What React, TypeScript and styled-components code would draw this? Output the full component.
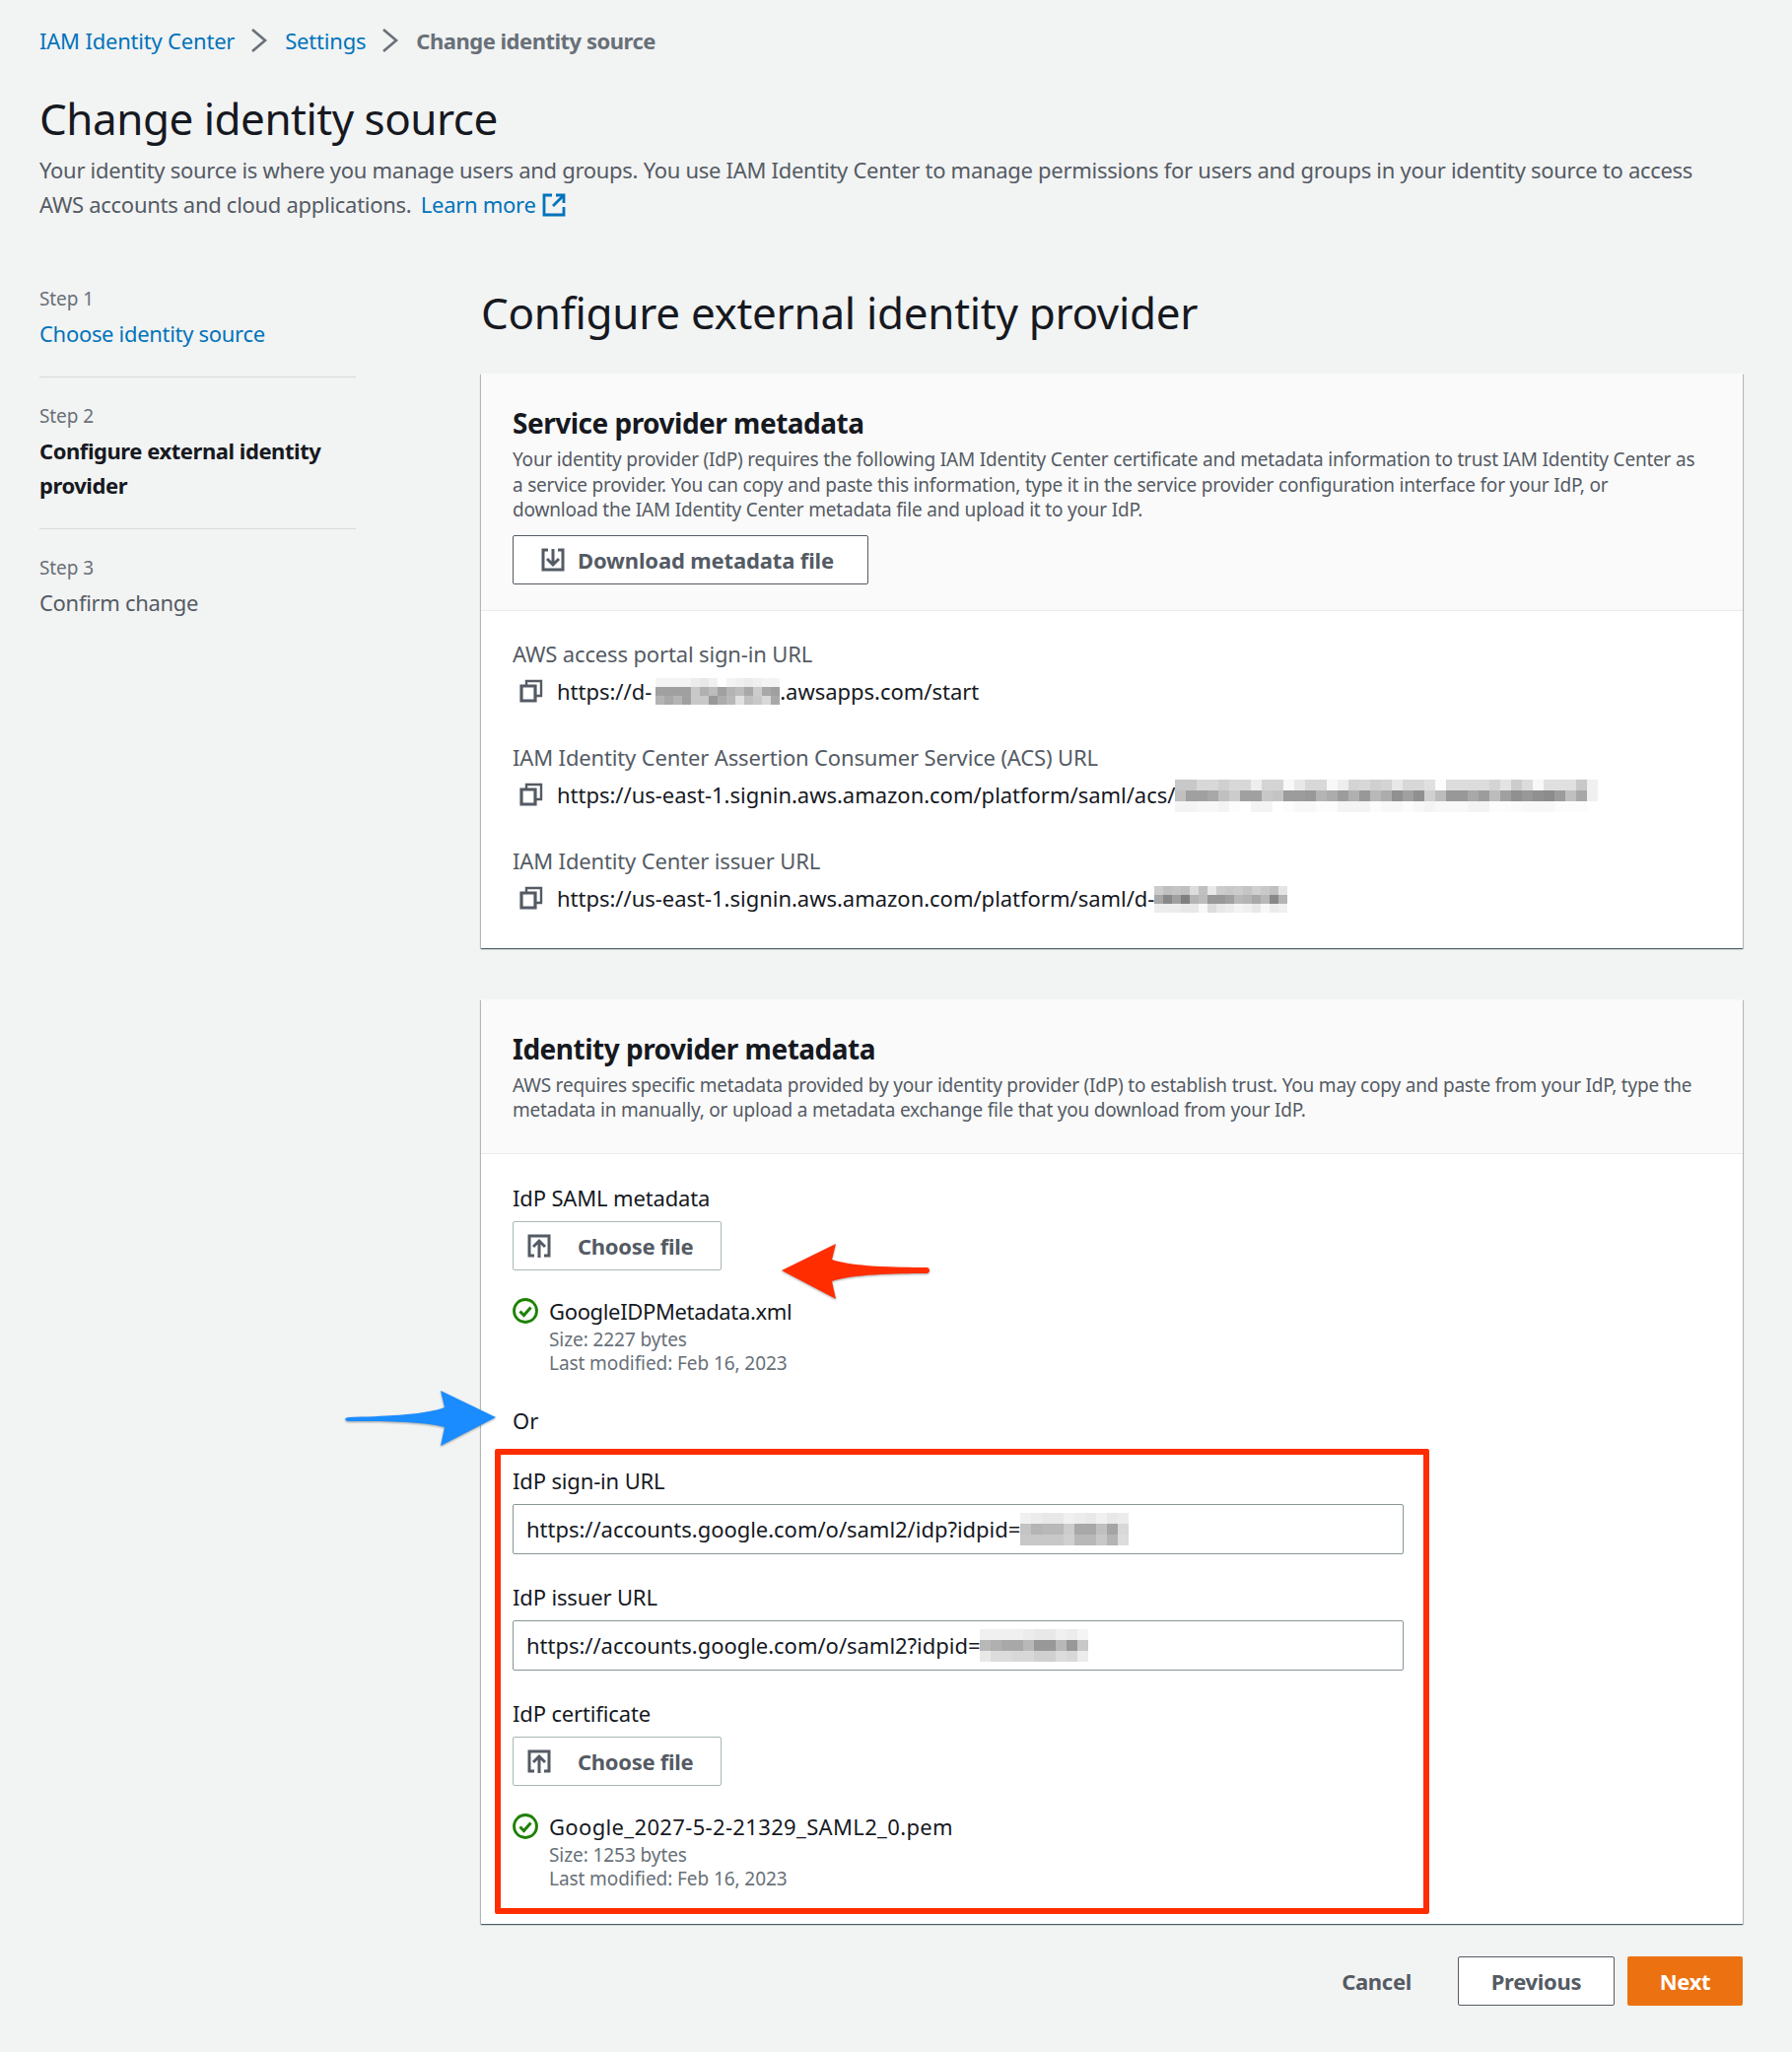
import React from 'react';
import styled, { createGlobalStyle } from 'styled-components';

const FONT = '"Noto Sans", "Open Sans", Arial, sans-serif';
const LINK = '#0073bb';
const INK = '#16191f';
const GREY = '#545b64';
const MUTED = '#687078';

const GlobalStyle = createGlobalStyle`
  html, body { margin: 0; padding: 0; background: #f2f3f3; }
  body { font-family: ${FONT}; color: ${INK}; }
  * { box-sizing: border-box; }
`;

const Page = styled.div`
  position: relative;
  width: 1818px;
  height: 2082px;
  padding: 24px 50px 47px 40px;
  overflow: hidden;
  background: #f2f3f3;
`;

const Crumbs = styled.nav`
  display: flex;
  align-items: center;
  height: 34px;
  font-size: 22px;
  letter-spacing: -0.2px;
`;

const CrumbLink = styled.a`
  color: ${LINK};
`;

const CrumbCurrent = styled.span`
  color: ${MUTED};
  font-weight: 700;
  letter-spacing: -0.5px;
`;

const CrumbSep = styled.svg`
  width: 20px;
  height: 26px;
  margin: 0 16px 0 15px;
  fill: none;
  stroke: ${MUTED};
  stroke-width: 2.6;
`;

const Title = styled.h1`
  margin: 35px 0 0;
  font-size: 44px;
  line-height: 54px;
  font-weight: 400;
  letter-spacing: -0.5px;
`;

const Intro = styled.p`
  margin: 8px 0 0;
  width: 1700px;
  font-size: 22px;
  line-height: 35px;
  color: ${GREY};
  letter-spacing: -0.29px;
`;

const InlineLink = styled.a`
  margin-left: 4px;
  color: ${LINK};
`;

const ExternalIcon = styled.svg`
  width: 24px;
  height: 24px;
  margin-left: 6px;
  vertical-align: -4px;
  fill: none;
  stroke: ${LINK};
  stroke-width: 2.8;
`;

const Columns = styled.div`
  display: grid;
  grid-template-columns: 448px 1280px;
  margin-top: 62px;
`;

const Steps = styled.ol`
  list-style: none;
  margin: 0;
  padding: 2px 0 0;
  width: 321px;
`;

const Step = styled.li<{ $last?: boolean }>`
  padding-bottom: 26px;
  margin-bottom: 25px;
  border-bottom: 1px solid ${(p) => (p.$last ? 'transparent' : '#d5dbdb')};
`;

const StepLabel = styled.div`
  font-size: 19px;
  line-height: 28px;
  color: ${MUTED};
  letter-spacing: -0.1px;
`;

const StepName = styled.div<{ $state: 'done' | 'active' | 'todo' }>`
  margin-top: 4px;
  font-size: 22px;
  line-height: 35px;
  letter-spacing: ${(p) => (p.$state === 'active' ? -0.45 : -0.31)}px;
  color: ${(p) => (p.$state === 'done' ? LINK : p.$state === 'active' ? INK : GREY)};
  font-weight: ${(p) => (p.$state === 'active' ? 700 : 400)};
`;

const Heading = styled.h2`
  margin: 0 0 32px;
  font-size: 44px;
  line-height: 60px;
  font-weight: 400;
  letter-spacing: -0.3px;
`;

const Card = styled.section`
  background: #fff;
  box-shadow: 0 1px 1px 0 rgba(0, 28, 36, 0.5), 1px 1px 1px 0 rgba(0, 28, 36, 0.2), -1px 1px 1px 0 rgba(0, 28, 36, 0.2);
  & + & { margin-top: 52px; }
`;

const CardHeader = styled.header<{ $bottom: number }>`
  padding: 30px 32px ${(p) => p.$bottom}px;
  background: #fafafa;
  border-bottom: 1px solid #eaeded;
`;

const CardTitle = styled.h3`
  margin: 0;
  font-size: 28px;
  line-height: 40px;
  font-weight: 700;
  letter-spacing: -0.5px;
`;

const CardText = styled.p`
  margin: 5px 0 0;
  max-width: 1201px;
  font-size: 19px;
  line-height: 25.5px;
  color: ${GREY};
  letter-spacing: -0.2px;
`;

const CardBody = styled.div<{ $pad: string }>`
  padding: ${(p) => p.$pad};
`;

const OutlineButton = styled.button`
  display: inline-flex;
  align-items: center;
  height: 50px;
  margin-top: 12px;
  padding: 0 34px 0 28px;
  background: #fff;
  border: 1px solid ${GREY};
  border-radius: 2px;
  font: 700 22px ${FONT};
  letter-spacing: -0.15px;
  color: ${GREY};
`;

const ButtonIcon = styled.svg`
  width: 24px;
  height: 24px;
  margin-right: 13px;
  fill: none;
  stroke: ${GREY};
  stroke-width: 2;
`;

const FieldLabel = styled.div`
  font-size: 22px;
  line-height: 34px;
  color: ${GREY};
  letter-spacing: -0.15px;
`;

const UrlRow = styled.div`
  display: flex;
  align-items: center;
  height: 34px;
  margin: 4px 0 33px;
  padding-left: 7px;
  font-size: 22px;
  letter-spacing: -0.02px;
  &:last-child { margin-bottom: 0; }
`;

const CopyIcon = styled.svg`
  width: 24px;
  height: 24px;
  margin-right: 14px;
  fill: none;
  stroke: ${GREY};
  stroke-width: 2.4;
`;

const MosaicGrid = styled.span<{ $cols: number; $cell: number; $drop: number }>`
  display: inline-grid;
  grid-template-columns: repeat(${(p) => p.$cols}, ${(p) => p.$cell}px);
  grid-auto-rows: ${(p) => p.$cell}px;
  flex: none;
  margin-top: ${(p) => p.$drop}px;
`;

const MosaicSlot = styled.span<{ $shift: number }>`
  display: inline-flex;
  align-items: center;
  height: 100%;
  margin-left: ${(p) => p.$shift}px;
`;

function Mosaic({ rows, cell, shift = 0, drop = 0 }: { rows: string[]; cell: number; shift?: number; drop?: number }) {
  const grid = rows.map((r) => r.split(' '));
  return (
    <MosaicSlot $shift={shift}>
      <MosaicGrid $cols={grid[0].length} $cell={cell} $drop={drop}>
        {grid.flat().map((c, i) => (
          <span key={i} style={{ background: `#${c}${c}${c}` }} />
        ))}
      </MosaicGrid>
    </MosaicSlot>
  );
}

const FormLabel = styled.div`
  font-size: 22px;
  line-height: 34px;
  letter-spacing: -0.15px;
`;

const FileButton = styled.button`
  display: flex;
  align-items: center;
  width: 212px;
  height: 50px;
  margin-top: 7px;
  padding: 0 0 0 14px;
  background: #fff;
  border: 1px solid #aab7b8;
  border-radius: 2px;
  font: 700 22px ${FONT};
  letter-spacing: -0.3px;
  color: ${GREY};
`;

const FileButtonIcon = styled(ButtonIcon)`
  margin-right: 27px;
`;

const FileRow = styled.div`
  display: grid;
  grid-template-columns: 37px 1fr;
  margin-top: 24px;
`;

const CheckIcon = styled.svg`
  width: 26px;
  height: 26px;
  margin-top: 4px;
  fill: none;
  stroke: #1d8102;
`;

const FileName = styled.div<{ $tight: number }>`
  font-size: 22px;
  line-height: 34px;
  letter-spacing: ${(p) => p.$tight}px;
`;

const FileMeta = styled.div`
  font-size: 19px;
  line-height: 24px;
  color: ${MUTED};
  letter-spacing: -0.08px;
`;

const OrLine = styled.div`
  margin-top: 29px;
  font-size: 22px;
  line-height: 34px;
`;

const Highlight = styled.div`
  width: 948px;
  margin: 12px 0 0 -18px;
  padding: 9px 20px 18px 12px;
  border: 6px solid #ff2d00;
  border-radius: 2px;
`;

const TextField = styled.div`
  display: flex;
  align-items: center;
  height: 51px;
  margin: 7px 0 26px;
  padding: 0 13px;
  border: 1px solid #879596;
  border-radius: 2px;
  font-size: 22px;
  letter-spacing: -0.03px;
`;

const Footer = styled.footer`
  display: flex;
  justify-content: flex-end;
  align-items: center;
  margin-top: 33px;
`;

const TextButton = styled.button`
  margin-right: 47px;
  padding: 0;
  background: none;
  border: 0;
  font: 700 22px ${FONT};
  letter-spacing: -0.3px;
  color: ${GREY};
`;

const SecondaryButton = styled.button`
  width: 159px;
  height: 50px;
  margin-right: 13px;
  background: #fff;
  border: 1px solid ${GREY};
  border-radius: 2px;
  font: 700 22px ${FONT};
  letter-spacing: -0.3px;
  color: ${GREY};
`;

const PrimaryButton = styled.button`
  width: 117px;
  height: 50px;
  background: #ec7211;
  border: 0;
  border-radius: 2px;
  font: 700 22px ${FONT};
  letter-spacing: -0.3px;
  color: #fff;
`;

const ArrowMark = styled.svg<{ $left: number; $top: number }>`
  position: absolute;
  left: ${(p) => p.$left}px;
  top: ${(p) => p.$top}px;
  overflow: visible;
  filter: drop-shadow(0 1px 1px rgba(0, 0, 0, 0.35));
`;

const Chevron = () => (
  <CrumbSep viewBox="0 0 20 26">
    <path d="M3 2l13 11L3 24" />
  </CrumbSep>
);

const Status = () => (
  <CheckIcon viewBox="0 0 26 26">
    <circle cx="13" cy="13" r="11.5" strokeWidth="2.8" />
    <path d="M7.5 13.5l4 4 7-8" strokeWidth="3" />
  </CheckIcon>
);

const Copy = () => (
  <CopyIcon viewBox="0 0 24 24">
    <path d="M2 7h14v15H2z" strokeWidth="3.2" />
    <path d="M7 7V2h15v15h-6" />
  </CopyIcon>
);

const Upload = () => (
  <FileButtonIcon viewBox="0 0 24 24">
    <path d="M7 22H2V2h20v20h-5" strokeWidth="3" />
    <path d="M12 24V8M6 13l6-6 6 6" strokeWidth="3" />
  </FileButtonIcon>
);

const AWS_ROWS = [
  'f4 f4 f4 f4 ec e8 f0 ff f4 f0 ec f0 f4 f4',
  'a0 a0 a0 a0 c8 b0 bc a0 b4 bc a8 cc a8 a0',
  'b4 a8 b4 a0 c8 c8 98 ac b8 e0 c0 c8 d8 a8',
];
const ACS_ROWS = [
  'c8 c8 d8 d8 d0 d8 d8 ee d4 d4 f8 e8 d8 d8 f8 ee d4 d8 d0 d4 e8 d8 d8 e0 fc dc dc dc dc d4 e4 cc dc f8 e0 e0 e0 c8 f0',
  'c0 a0 a0 a8 c0 cc a0 a0 c8 c4 9c 9c 98 b4 ac 9c b0 98 b8 ac 90 a0 90 d0 bc 98 98 a8 9c bc a0 90 98 90 8c 9c c0 a8 f0',
  'f4 f4 f8 f8 f4 fc ff f4 f4 ff fc f8 f8 fc fc f4 f4 f4 fc f8 f8 fc f8 f4 f8 f8 f8 f4 f4 fc fc fa f8 f8 f8 fc fc fc ff',
];
const ISSUER_ROWS = [
  'cc c0 c4 c0 dc c0 e8 cc c8 cc c4 d0 c8 c0 e4',
  'a8 88 a0 80 b4 bc 98 98 a0 b8 b4 a8 b8 88 b4',
  'ec ec ec e8 e8 f8 dc e8 ec f4 f0 e8 f8 ec f0',
];
const IDP_ROWS = [
  'f0 ec e8 e8 f0 ec e8 f0 e8 ec',
  'c4 b4 b8 b8 cc a8 a8 c0 a4 d8',
  'c8 c8 c8 c8 d0 b8 b8 c8 b4 dc',
];
const IDP2_ROWS = [
  'f0 f0 f0 f0 ec e8 e8 f0 ec f4',
  'b8 b0 a8 a8 b8 98 98 b8 98 c8',
  'e8 dc dc d8 d8 d0 d0 dc d8 ec',
];

export default function App() {
  return (
    <Page>
      <GlobalStyle />
      <Crumbs>
        <CrumbLink>IAM Identity Center</CrumbLink>
        <Chevron />
        <CrumbLink>Settings</CrumbLink>
        <Chevron />
        <CrumbCurrent>Change identity source</CrumbCurrent>
      </Crumbs>
      <Title>Change identity source</Title>
      <Intro>
        Your identity source is where you manage users and groups. You use IAM Identity Center to manage permissions for users and groups in your identity source to access AWS accounts and cloud applications.{' '}
        <InlineLink>Learn more</InlineLink>
        <ExternalIcon viewBox="0 0 24 24">
          <path d="M14 2h8v8M11 13L22 2M22 14v8H2V2h8" />
        </ExternalIcon>
      </Intro>
      <Columns>
        <Steps>
          <Step>
            <StepLabel>Step 1</StepLabel>
            <StepName $state="done">Choose identity source</StepName>
          </Step>
          <Step>
            <StepLabel>Step 2</StepLabel>
            <StepName $state="active">Configure external identity provider</StepName>
          </Step>
          <Step $last>
            <StepLabel>Step 3</StepLabel>
            <StepName $state="todo">Confirm change</StepName>
          </Step>
        </Steps>
        <main>
          <Heading>Configure external identity provider</Heading>
          <Card>
            <CardHeader $bottom={26}>
              <CardTitle>Service provider metadata</CardTitle>
              <CardText>
                Your identity provider (IdP) requires the following IAM Identity Center certificate and metadata information to trust IAM Identity Center as a service provider. You can copy and paste this information, type it in the service provider configuration interface for your IdP, or download the IAM Identity Center metadata file and upload it to your IdP.
              </CardText>
              <OutlineButton>
                <ButtonIcon viewBox="0 0 24 24">
                  <path d="M7 2H2v20h20V2h-5" strokeWidth="3" />
                  <path d="M12 1v15M6 11l6 6 6-6" strokeWidth="3" />
                </ButtonIcon>
                Download metadata file
              </OutlineButton>
            </CardHeader>
            <CardBody $pad="26px 32px 34px">
              <FieldLabel>AWS access portal sign-in URL</FieldLabel>
              <UrlRow>
                <Copy />
                https://d-
                <Mosaic rows={AWS_ROWS} cell={9} shift={4} drop={2} />
                .awsapps.com/start
              </UrlRow>
              <FieldLabel>IAM Identity Center Assertion Consumer Service (ACS) URL</FieldLabel>
              <UrlRow>
                <Copy />
                https://us-east-1.signin.aws.amazon.com/platform/saml/acs/
                <Mosaic rows={ACS_ROWS} cell={11} drop={4} />
              </UrlRow>
              <FieldLabel>IAM Identity Center issuer URL</FieldLabel>
              <UrlRow>
                <Copy />
                https://us-east-1.signin.aws.amazon.com/platform/saml/d-
                <Mosaic rows={ISSUER_ROWS} cell={9} drop={4} />
              </UrlRow>
            </CardBody>
          </Card>
          <Card>
            <CardHeader $bottom={30}>
              <CardTitle>Identity provider metadata</CardTitle>
              <CardText>
                AWS requires specific metadata provided by your identity provider (IdP) to establish trust. You may copy and paste from your IdP, type the metadata in manually, or upload a metadata exchange file that you download from your IdP.
              </CardText>
            </CardHeader>
            <CardBody $pad="27px 32px 10px">
              <FormLabel>IdP SAML metadata</FormLabel>
              <FileButton>
                <Upload />
                Choose file
              </FileButton>
              <FileRow>
                <Status />
                <div>
                  <FileName $tight={-0.35}>GoogleIDPMetadata.xml</FileName>
                  <FileMeta>Size: 2227 bytes</FileMeta>
                  <FileMeta>Last modified: Feb 16, 2023</FileMeta>
                </div>
              </FileRow>
              <OrLine>Or</OrLine>
              <Highlight>
                <FormLabel>IdP sign-in URL</FormLabel>
                <TextField>
                  https://accounts.google.com/o/saml2/idp?idpid=
                  <Mosaic rows={IDP_ROWS} cell={11} />
                </TextField>
                <FormLabel>IdP issuer URL</FormLabel>
                <TextField>
                  https://accounts.google.com/o/saml2?idpid=
                  <Mosaic rows={IDP2_ROWS} cell={11} />
                </TextField>
                <FormLabel>IdP certificate</FormLabel>
                <FileButton>
                  <Upload />
                  Choose file
                </FileButton>
                <FileRow>
                  <Status />
                  <div>
                    <FileName $tight={0.35}>Google_2027-5-2-21329_SAML2_0.pem</FileName>
                    <FileMeta>Size: 1253 bytes</FileMeta>
                    <FileMeta>Last modified: Feb 16, 2023</FileMeta>
                  </div>
                </FileRow>
              </Highlight>
            </CardBody>
          </Card>
          <Footer>
            <TextButton>Cancel</TextButton>
            <SecondaryButton>Previous</SecondaryButton>
            <PrimaryButton>Next</PrimaryButton>
          </Footer>
        </main>
      </Columns>
      <ArrowMark $left={793} $top={1262} width="151" height="57" viewBox="0 0 151 57">
        <path fill="#ff2d00" d="M0 27L55 0L51 16C70 23 115 24 147 24C151 24 151 30 147 30C115 30 70 31 51 38L55 56Z" />
      </ArrowMark>
      <ArrowMark $left={350} $top={1411} width="154" height="57" viewBox="0 0 154 57">
        <path fill="#1a8cff" d="M153 27L97 0L101 17C80 25 35 26 4 27C-1 27 -1 31 4 31C35 31 80 31 101 37L97 56Z" />
      </ArrowMark>
    </Page>
  );
}
